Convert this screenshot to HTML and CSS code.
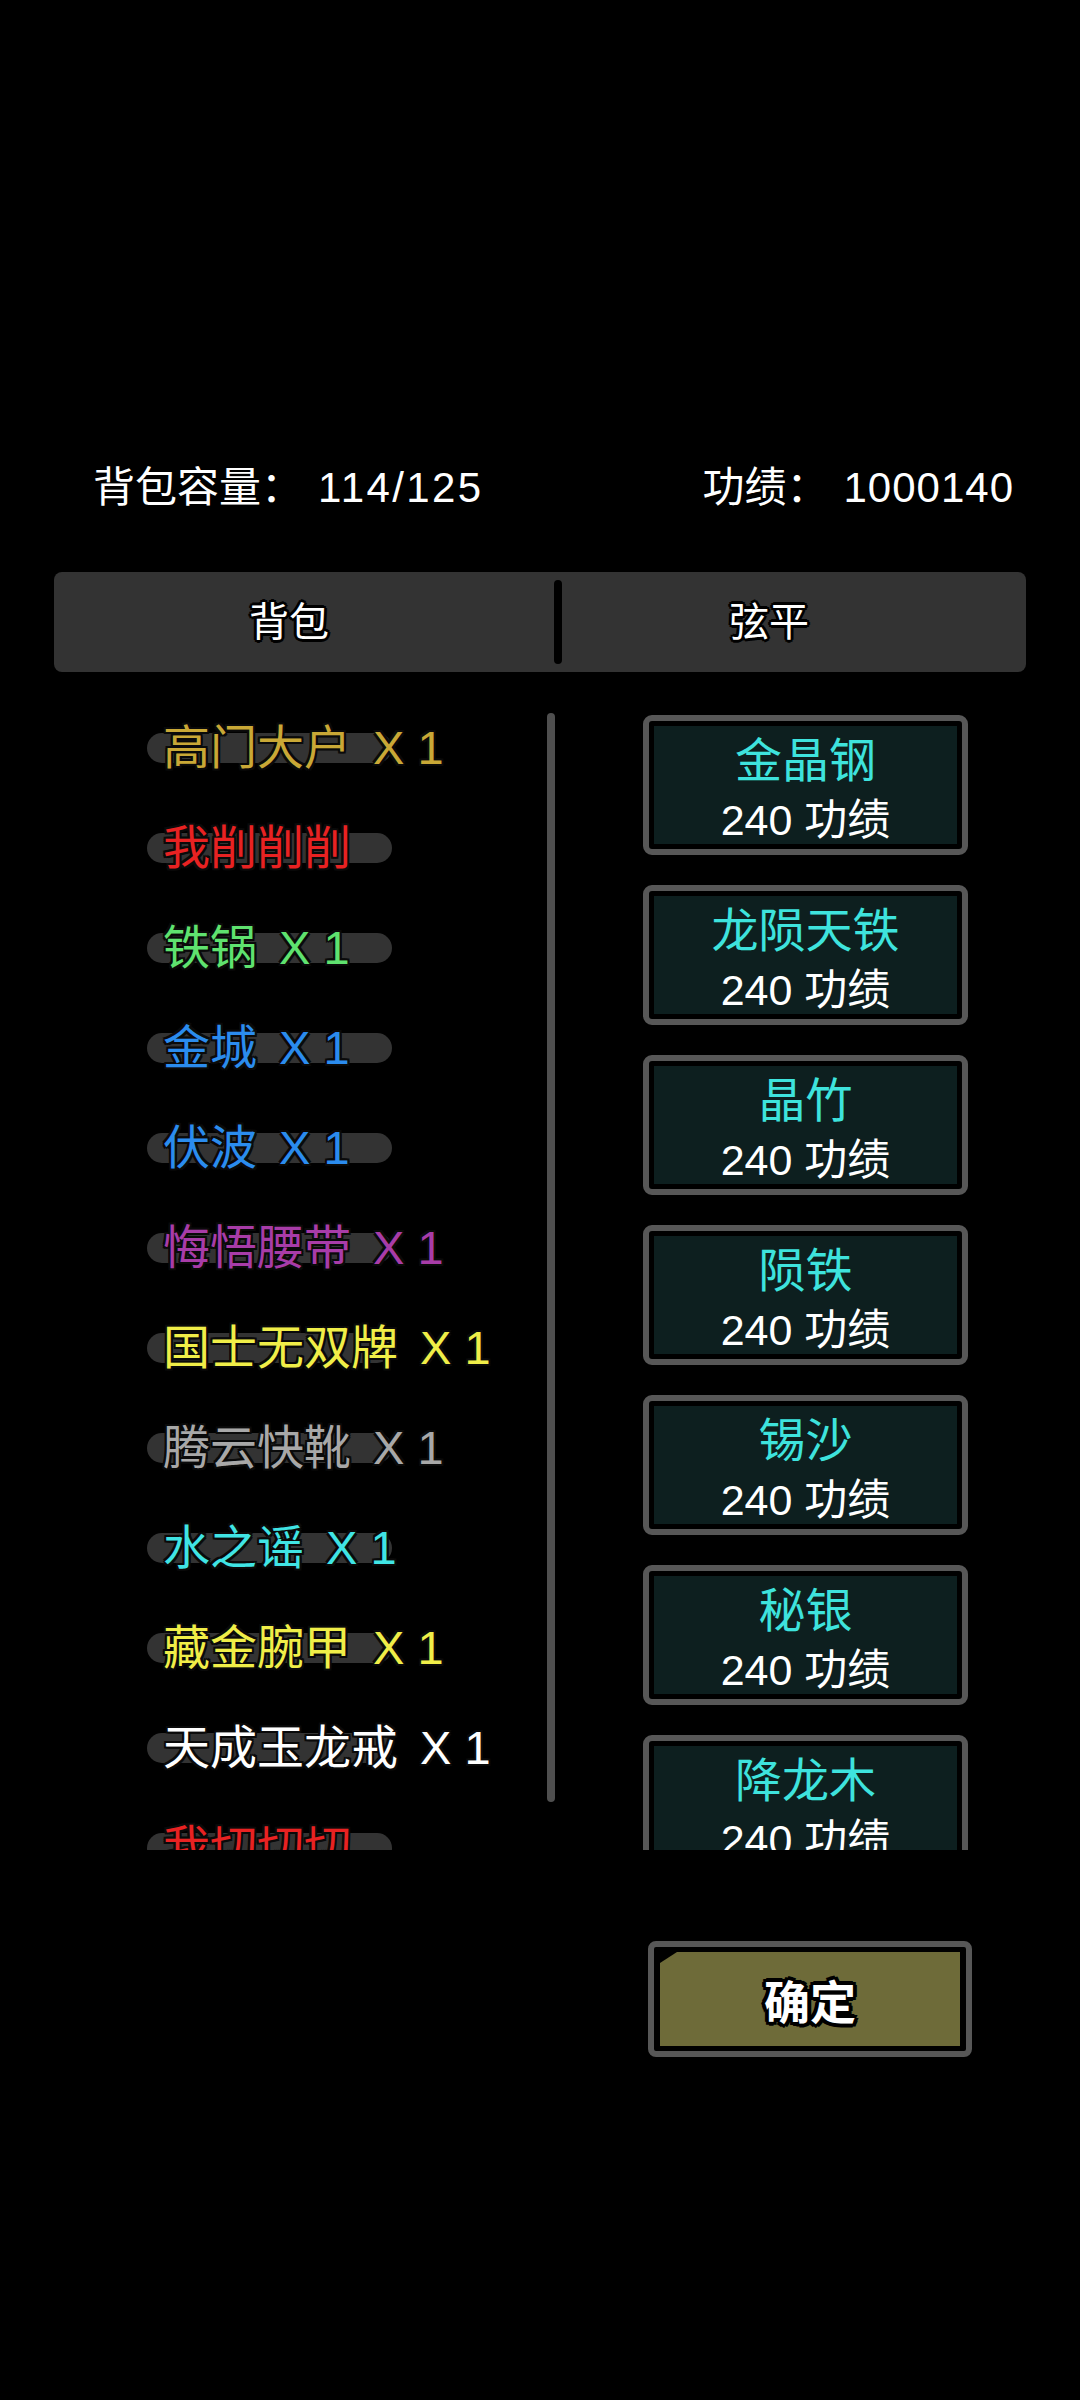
FILE: index.html
```html
<!DOCTYPE html>
<html lang="zh-CN">
<head>
<meta charset="utf-8">
<title>背包</title>
<link rel="stylesheet" href="styles.css">
</head>
<body>
<div class="page">
  <div class="header">
    <div class="stat"><span class="label">背包容量：</span><span class="value value-wide">114/125</span></div>
    <div class="stat"><span class="label">功绩：</span><span class="value">1000140</span></div>
  </div>

  <div class="tabs">
    <div class="tab tab-left">背包</div>
    <div class="divider"></div>
    <div class="tab tab-right">弦平</div>
  </div>

  <div class="content">
    <div class="list">
      <div class="row"><span class="item c-gold"><span class="name">高门大户</span><span class="qty">X 1</span></span></div>
      <div class="row"><span class="item c-red"><span class="name">我削削削</span></span></div>
      <div class="row"><span class="item c-green"><span class="name">铁锅</span><span class="qty">X 1</span></span></div>
      <div class="row"><span class="item c-blue"><span class="name">金城</span><span class="qty">X 1</span></span></div>
      <div class="row"><span class="item c-blue"><span class="name">伏波</span><span class="qty">X 1</span></span></div>
      <div class="row"><span class="item c-purple"><span class="name">悔悟腰带</span><span class="qty">X 1</span></span></div>
      <div class="row"><span class="item c-yellow"><span class="name">国士无双牌</span><span class="qty">X 1</span></span></div>
      <div class="row"><span class="item c-gray"><span class="name">腾云快靴</span><span class="qty">X 1</span></span></div>
      <div class="row"><span class="item c-cyan"><span class="name">水之谣</span><span class="qty">X 1</span></span></div>
      <div class="row"><span class="item c-yellow"><span class="name">藏金腕甲</span><span class="qty">X 1</span></span></div>
      <div class="row"><span class="item c-white"><span class="name">天成玉龙戒</span><span class="qty">X 1</span></span></div>
      <div class="row"><span class="item c-red"><span class="name">我切切切</span></span></div>
    </div>
    <div class="scrollbar"></div>
    <div class="cards">
      <div class="card"><div class="card-fill"><div class="card-title">金晶钢</div><div class="card-price">240 功绩</div></div></div>
      <div class="card"><div class="card-fill"><div class="card-title">龙陨天铁</div><div class="card-price">240 功绩</div></div></div>
      <div class="card"><div class="card-fill"><div class="card-title">晶竹</div><div class="card-price">240 功绩</div></div></div>
      <div class="card"><div class="card-fill"><div class="card-title">陨铁</div><div class="card-price">240 功绩</div></div></div>
      <div class="card"><div class="card-fill"><div class="card-title">锡沙</div><div class="card-price">240 功绩</div></div></div>
      <div class="card"><div class="card-fill"><div class="card-title">秘银</div><div class="card-price">240 功绩</div></div></div>
      <div class="card"><div class="card-fill"><div class="card-title">降龙木</div><div class="card-price">240 功绩</div></div></div>
    </div>
  </div>

  <div class="footer">
    <div class="confirm"><div class="confirm-fill">确定</div></div>
  </div>
</div>
</body>
</html>
```
FILE: styles.css
```css
html, body {
  margin: 0;
  padding: 0;
  background: #000;
}
body {
  width: 1080px;
  height: 2400px;
  overflow: hidden;
  font-family: "Liberation Sans", "Noto Sans CJK SC", sans-serif;
  color: #fff;
}
.page {
  width: 1080px;
}

.header {
  display: flex;
  justify-content: space-between;
  padding: 458px 66px 0 93px;
  height: 60px;
  line-height: 60px;
  font-size: 42px;
  color: #fff;
}
.value {
  margin-left: 15px;
  letter-spacing: 1px;
}
.value-wide {
  letter-spacing: 2.4px;
}

.tabs {
  margin: 54px 54px 0;
  height: 100px;
  background: #333333;
  border-radius: 8px;
  display: flex;
  align-items: center;
}
.tab {
  font-size: 40px;
  line-height: 100px;
  text-align: center;
  color: #fff;
  text-shadow: 3px 0 #000, -3px 0 #000, 0 3px #000, 0 -3px #000,
    2px 2px #000, -2px -2px #000, 2px -2px #000, -2px 2px #000;
}
.tab-left {
  width: 500px;
  box-sizing: border-box;
  padding-right: 30px;
}
.tab-right {
  flex: 1;
  padding-right: 50px;
}
.divider {
  width: 8px;
  height: 84px;
  background: #000;
  border-radius: 4px;
}

.content {
  margin-top: 26px;
  height: 1152px;
  display: flex;
  overflow: hidden;
}
.list {
  width: 547px;
  padding-left: 147px;
  box-sizing: border-box;
}
.row {
  height: 100px;
  position: relative;
  display: flex;
  align-items: center;
}
.row::before {
  content: "";
  position: absolute;
  left: 0;
  top: 35px;
  width: 245px;
  height: 30px;
  border-radius: 15px;
  background: #333333;
}
.item {
  position: relative;
  padding-left: 16px;
  font-size: 47px;
  line-height: 100px;
  white-space: nowrap;
  text-shadow: 2px 0 #0a0a0a, -2px 0 #0a0a0a, 0 2px #0a0a0a, 0 -2px #0a0a0a,
    2px 2px #0a0a0a, -2px -2px #0a0a0a, 2px -2px #0a0a0a, -2px 2px #0a0a0a;
}
.qty {
  margin-left: 22px;
}
.c-gold { color: #c9a836; }
.c-red { color: #e82222; }
.c-green { color: #5fe26f; }
.c-blue { color: #2b8cee; }
.c-purple { color: #a83ca8; }
.c-yellow { color: #f0ee48; }
.c-gray { color: #a8a8a8; }
.c-cyan { color: #40e4e4; }
.c-white { color: #ffffff; }

.scrollbar {
  width: 8px;
  height: 1089px;
  margin-top: 15px;
  background: #4f4f4f;
  border-radius: 4px;
  flex-shrink: 0;
}

.cards {
  margin-left: 88px;
  padding-top: 17px;
  width: 325px;
  display: flex;
  flex-direction: column;
  gap: 30px;
  flex-shrink: 0;
}
.card {
  height: 140px;
  box-sizing: border-box;
  border: 6px solid #575757;
  border-radius: 9px;
  background: #000;
  padding: 5px;
  flex-shrink: 0;
}
.card-fill {
  height: 100%;
  background: #0d1f1f;
  display: flex;
  flex-direction: column;
  align-items: center;
}
.card-title {
  margin-top: 5px;
  font-size: 47px;
  line-height: 60px;
  color: #3ee3dd;
}
.card-price {
  margin-top: 4px;
  font-size: 43px;
  line-height: 50px;
  color: #fff;
}

.footer {
  margin-top: 91px;
  padding-left: 648px;
}
.confirm {
  width: 324px;
  height: 116px;
  box-sizing: border-box;
  border: 6px solid #575757;
  border-radius: 8px;
  background: #000;
  padding: 5px 6px 5px 6px;
}
.confirm-fill {
  height: 100%;
  background: #6e6b39;
  clip-path: polygon(17px 0, 100% 0, 100% 100%, 0 100%, 0 11px);
  display: flex;
  align-items: center;
  justify-content: center;
  font-size: 46px;
  font-weight: 700;
  color: #fff;
  text-shadow: 4px 0 #000, -4px 0 #000, 0 4px #000, 0 -4px #000,
    3px 3px #000, -3px -3px #000, 3px -3px #000, -3px 3px #000;
}
```
